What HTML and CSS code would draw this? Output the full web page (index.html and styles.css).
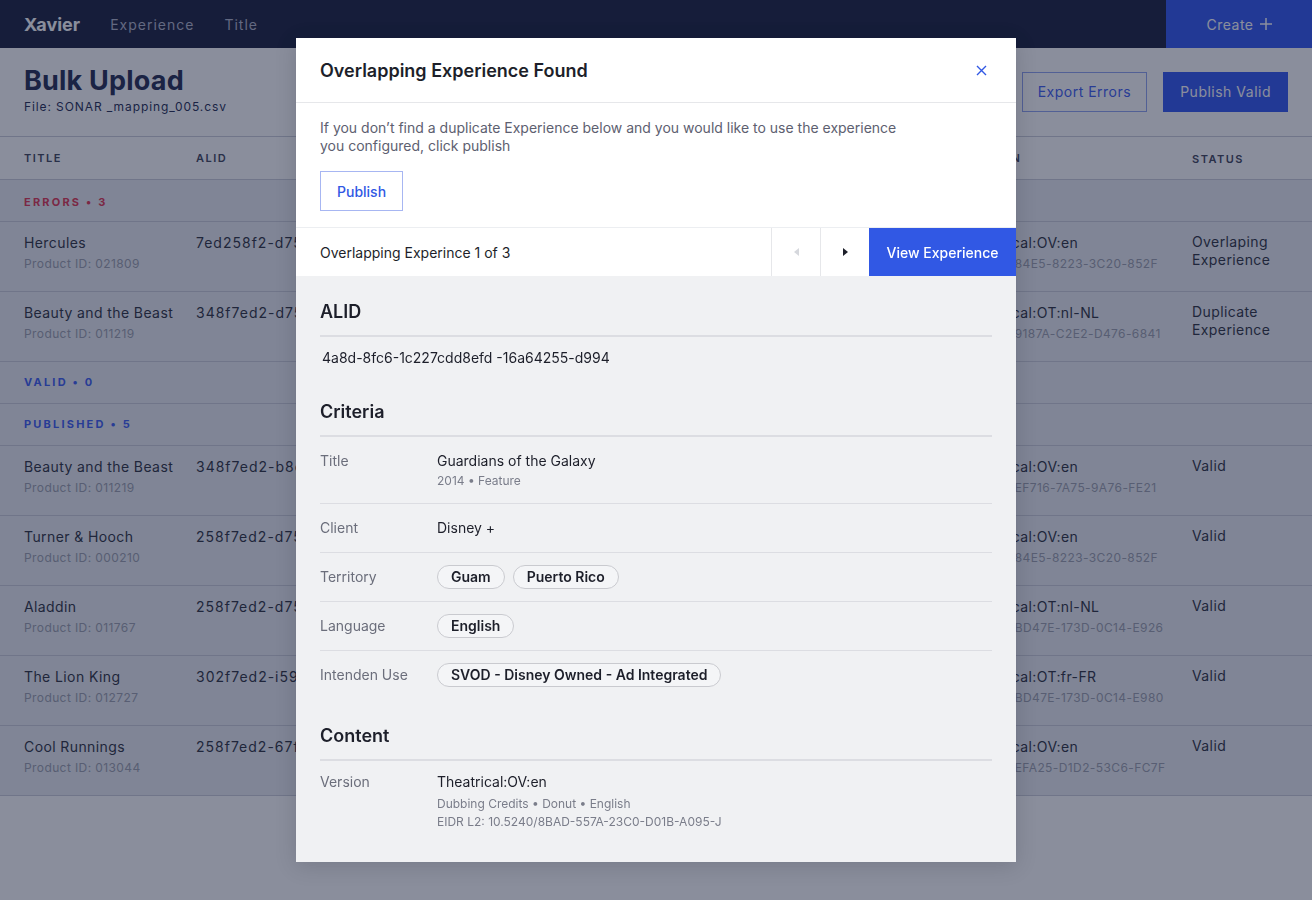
FILE: index.html
```html
<!DOCTYPE html>
<html lang="en">
<head>
  <meta charset="UTF-8">
  <meta name="viewport" content="width=device-width, initial-scale=1.0">
  <title>Bulk Upload - Xavier</title>
  <link rel="stylesheet" href="styles.css">
</head>
<body>
  <!-- Top navigation -->
  <nav class="topbar">
    <div class="brand">Xavier</div>
    <a class="nav-link" href="#">Experience</a>
    <a class="nav-link" href="#">Title</a>
    <button class="create-button">Create
      <svg width="12" height="12" viewBox="0 0 12 12"><path d="M6 0v12M0 6h12" stroke="currentColor" stroke-width="1.5" fill="none"/></svg>
    </button>
  </nav>

  <main class="page">
    <header class="page-head">
      <div>
        <h1>Bulk Upload</h1>
        <div class="file-name">File: SONAR _mapping_005.csv</div>
      </div>
      <div class="head-actions">
        <button class="btn-outline">Export Errors</button>
        <button class="btn-solid">Publish Valid</button>
      </div>
    </header>

    <div class="table">
      <div class="tr th">
        <div>Title</div>
        <div>ALID</div>
        <div>Client</div>
        <div>Territory</div>
        <div>Version</div>
        <div>Status</div>
      </div>

      <div class="group error">Errors • 3</div>
      <div class="tr">
        <div><div class="name">Hercules</div><div class="sub">Product ID: 021809</div></div>
        <div class="mono">7ed258f2-d753-4a8d-8fc6</div>
        <div>Disney +</div>
        <div>Guam</div>
        <div><div>Theatrical:OV:en</div><div class="sub">10.5240/84E5-8223-3C20-852F</div></div>
        <div>Overlaping Experience</div>
      </div>
      <div class="tr">
        <div><div class="name">Beauty and the Beast</div><div class="sub">Product ID: 011219</div></div>
        <div class="mono">348f7ed2-d75a-4a8d-8fc6</div>
        <div>Disney +</div>
        <div>Netherlands</div>
        <div><div>Theatrical:OT:nl-NL</div><div class="sub">10.5240/9187A-C2E2-D476-6841</div></div>
        <div>Duplicate Experience</div>
      </div>

      <div class="group">Valid • 0</div>
      <div class="group">Published • 5</div>

      <div class="tr">
        <div><div class="name">Beauty and the Beast</div><div class="sub">Product ID: 011219</div></div>
        <div class="mono">348f7ed2-b8c1-4a8d-8fc6</div>
        <div>Disney +</div>
        <div>Guam</div>
        <div><div>Theatrical:OV:en</div><div class="sub">10.5240/EF716-7A75-9A76-FE21</div></div>
        <div>Valid</div>
      </div>
      <div class="tr">
        <div><div class="name">Turner &amp; Hooch</div><div class="sub">Product ID: 000210</div></div>
        <div class="mono">258f7ed2-d753-4a8d-8fc6</div>
        <div>Disney +</div>
        <div>Puerto Rico</div>
        <div><div>Theatrical:OV:en</div><div class="sub">10.5240/84E5-8223-3C20-852F</div></div>
        <div>Valid</div>
      </div>
      <div class="tr">
        <div><div class="name">Aladdin</div><div class="sub">Product ID: 011767</div></div>
        <div class="mono">258f7ed2-d753-1c22-7cdd</div>
        <div>Disney +</div>
        <div>Netherlands</div>
        <div><div>Theatrical:OT:nl-NL</div><div class="sub">10.5240/BD47E-173D-0C14-E926</div></div>
        <div>Valid</div>
      </div>
      <div class="tr">
        <div><div class="name">The Lion King</div><div class="sub">Product ID: 012727</div></div>
        <div class="mono">302f7ed2-i597-8efd-16a6</div>
        <div>Disney +</div>
        <div>France</div>
        <div><div>Theatrical:OT:fr-FR</div><div class="sub">10.5240/BD47E-173D-0C14-E980</div></div>
        <div>Valid</div>
      </div>
      <div class="tr">
        <div><div class="name">Cool Runnings</div><div class="sub">Product ID: 013044</div></div>
        <div class="mono">258f7ed2-67f9-4255-d994</div>
        <div>Disney +</div>
        <div>Guam</div>
        <div><div>Theatrical:OV:en</div><div class="sub">10.5240/EFA25-D1D2-53C6-FC7F</div></div>
        <div>Valid</div>
      </div>
    </div>
  </main>

  <!-- Overlapping experience dialog -->
  <div class="backdrop">
    <section class="modal">
      <div class="modal-head">
        <h2>Overlapping Experience Found</h2>
        <button class="close-button">
          <svg width="11" height="11" viewBox="0 0 11 11"><path d="M1 1l9 9M10 1l-9 9" stroke="currentColor" stroke-width="1.4" fill="none"/></svg>
        </button>
      </div>

      <div class="modal-intro">
        <p>If you don’t find a duplicate Experience below and you would like to use the experience you configured, click publish</p>
        <button class="btn-publish">Publish</button>
      </div>

      <div class="pager">
        <div class="pager-label">Overlapping Experince 1 of 3</div>
        <button class="pager-arrow" disabled>
          <svg width="5" height="8" viewBox="0 0 5 8"><path d="M5 0L0 4L5 8Z"/></svg>
        </button>
        <button class="pager-arrow">
          <svg width="5" height="8" viewBox="0 0 5 8"><path d="M0 0L5 4L0 8Z"/></svg>
        </button>
        <button class="btn-view">View Experience</button>
      </div>

      <div class="modal-body">
        <div class="section">
          <h3>ALID</h3>
          <div class="alid">4a8d-8fc6-1c227cdd8efd -16a64255-d994</div>
        </div>

        <div class="section">
          <h3>Criteria</h3>
          <div class="field">
            <div class="label">Title</div>
            <div class="value">Guardians of the Galaxy<div class="note">2014 • Feature</div></div>
          </div>
          <div class="field">
            <div class="label">Client</div>
            <div class="value">Disney +</div>
          </div>
          <div class="field">
            <div class="label">Territory</div>
            <div class="value chips"><span class="chip">Guam</span><span class="chip">Puerto Rico</span></div>
          </div>
          <div class="field">
            <div class="label">Language</div>
            <div class="value chips"><span class="chip">English</span></div>
          </div>
          <div class="field">
            <div class="label">Intenden Use</div>
            <div class="value chips"><span class="chip">SVOD - Disney Owned - Ad Integrated</span></div>
          </div>
        </div>

        <div class="section content">
          <h3>Content</h3>
          <div class="field version">
            <div class="label">Version</div>
            <div class="value">Theatrical:OV:en
              <div class="note tall">Dubbing Credits • Donut • English</div>
              <div class="note tall">EIDR L2: 10.5240/8BAD-557A-23C0-D01B-A095-J</div>
            </div>
          </div>
        </div>
      </div>
    </section>
  </div>
</body>
</html>
```
FILE: styles.css
```css
/* Reset */
* {
  margin: 0;
  padding: 0;
  box-sizing: border-box;
}

body {
  font-family: 'Inter', 'Liberation Sans', sans-serif;
  font-size: 14px;
  color: #2b2f3c;
  background-color: #fff;
  height: 100vh;
  overflow: hidden;
}

button {
  font-family: inherit;
  border: none;
  background: none;
  cursor: pointer;
}

/* Top navigation */
.topbar {
  height: 48px;
  background-color: #161d3a;
  display: flex;
  align-items: center;
  padding-left: 24px;
}

.brand {
  color: #fff;
  font-size: 18px;
  font-weight: 700;
  margin-right: 30px;
}

.nav-link {
  color: #b0b4c8;
  text-decoration: none;
  letter-spacing: 1px;
  margin-right: 30px;
}

.create-button {
  margin-left: auto;
  width: 146px;
  height: 48px;
  background-color: #2f55f0;
  color: #fff;
  font-size: 14px;
  letter-spacing: 0.5px;
  display: flex;
  align-items: center;
  justify-content: center;
  gap: 6px;
}

/* Page header */
.page-head {
  display: flex;
  justify-content: space-between;
  align-items: center;
  padding: 16px 24px 21px;
  border-bottom: 1px solid #cacdd8;
}

.page-head h1 {
  font-size: 27px;
  line-height: 34px;
  font-weight: 700;
  color: #20294f;
  letter-spacing: 0.2px;
}

.file-name {
  font-size: 12px;
  line-height: 16px;
  letter-spacing: 0.9px;
  color: #20294f;
  margin-top: 1px;
}

.head-actions {
  display: flex;
  gap: 16px;
  margin-top: 4px;
}

.btn-outline,
.btn-solid {
  height: 40px;
  padding: 0 17px;
  font-size: 14px;
  letter-spacing: 0.5px;
}

.btn-outline {
  padding: 0 15px;
  border: 1px solid #8fa2f0;
  color: #3a5bf0;
}

.btn-solid {
  background-color: #2f55f0;
  color: #fff;
}

/* Upload table */
.table {
  background-color: #ebedf2;
}

.tr {
  display: grid;
  grid-template-columns: 172px 260px 1fr 1fr 230px 96px;
  padding: 11px 24px 19px;
  border-bottom: 1px solid #cacdd8;
  line-height: 20px;
  letter-spacing: 0.4px;
  white-space: nowrap;
}

.tr > div:last-child {
  white-space: normal;
  line-height: 18px;
}

.tr.th {
  background-color: #fff;
  padding: 13px 24px 11px;
  font-size: 11px;
  line-height: 16px;
  font-weight: 600;
  letter-spacing: 1.5px;
  text-transform: uppercase;
  color: #3d4257;
}

.sub {
  font-size: 12px;
  line-height: 16px;
  margin-top: 3px;
  color: #9a9eac;
  letter-spacing: 0.4px;
}

.mono {
  letter-spacing: 1px;
}

.group {
  padding: 12px 24px 13px;
  font-size: 11px;
  line-height: 16px;
  font-weight: 700;
  letter-spacing: 2.2px;
  text-transform: uppercase;
  color: #3a5bf0;
  border-bottom: 1px solid #cacdd8;
}

.group.error {
  padding: 14px 24px 11px;
  color: #e0324f;
}

/* Dialog */
.backdrop {
  position: fixed;
  inset: 0;
  background-color: rgba(22, 29, 58, 0.5);
  display: flex;
  justify-content: center;
  align-items: flex-start;
  padding-top: 38px;
}

.modal {
  width: 720px;
  background-color: #f0f1f3;
  box-shadow: 0 4px 20px rgba(10, 14, 30, 0.15);
  color: #1d1f2a;
}

.modal-head {
  height: 65px;
  background-color: #fff;
  border-bottom: 1px solid #e6e7ea;
  display: flex;
  align-items: center;
  justify-content: space-between;
  padding: 0 24px;
}

.modal-head h2 {
  font-size: 18px;
  font-weight: 600;
}

.close-button {
  color: #3158e4;
  width: 22px;
  height: 22px;
  display: flex;
  align-items: center;
  justify-content: center;
}

.modal-intro {
  background-color: #fff;
  padding: 16px 24px 16px;
  border-bottom: 1px solid #eceef1;
}

.modal-intro p {
  max-width: 600px;
  line-height: 18px;
  color: #5d6070;
}

.btn-publish {
  margin-top: 16px;
  height: 40px;
  padding: 0 16px;
  border: 1px solid #a7b6f2;
  color: #3158e4;
  font-size: 14px;
  font-weight: 500;
}

.pager {
  height: 48px;
  background-color: #fff;
  display: flex;
  align-items: stretch;
}

.pager-label {
  flex: 1;
  display: flex;
  align-items: center;
  padding-left: 24px;
}

.pager-arrow {
  width: 49px;
  border-left: 1px solid #e6e7ea;
  display: flex;
  align-items: center;
  justify-content: center;
  fill: #1d1f2a;
}

.pager-arrow:disabled {
  fill: #d6d8dd;
  cursor: default;
}

.btn-view {
  width: 147px;
  background-color: #3158e4;
  color: #fff;
  font-size: 14px;
  font-weight: 500;
}

.modal-body {
  padding: 24px 24px 31px;
}

.section + .section {
  margin-top: 24px;
}

.section.content {
  margin-top: 25px;
}

.section h3 {
  font-size: 18px;
  line-height: 24px;
  font-weight: 600;
  padding-bottom: 11px;
  border-bottom: 2px solid #dcdde2;
}

.alid {
  margin-top: 11px;
  padding: 0 2px 8px;
  line-height: 20px;
}

.field {
  display: flex;
  padding: 12px 0;
  border-bottom: 1px solid #dcdde2;
  line-height: 24px;
}

.field:last-child {
  border-bottom: none;
}

.label {
  width: 117px;
  flex-shrink: 0;
  color: #6b6e7b;
}

.value {
  flex: 1;
}

.note {
  font-size: 12px;
  line-height: 16px;
  color: #7a7d8a;
  margin-bottom: 2px;
}

.note.tall {
  line-height: 18px;
  margin-bottom: 0;
}

.field.version {
  padding-top: 9px;
  padding-bottom: 0;
}

.field.version .note:first-of-type {
  margin-top: 1px;
}

.chips {
  display: flex;
  gap: 8px;
}

.chip {
  height: 24px;
  line-height: 22px;
  padding: 0 13px;
  border: 1px solid #c9cacf;
  border-radius: 12px;
  background-color: #f4f5f7;
  font-weight: 600;
}
```
